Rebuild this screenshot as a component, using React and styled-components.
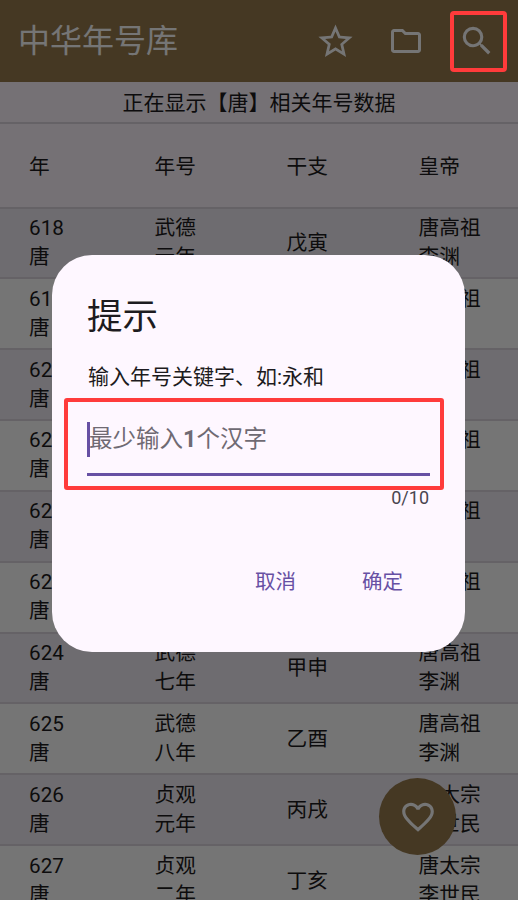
import React from 'react';
import styled, { createGlobalStyle } from 'styled-components';
import { MdFavoriteBorder, MdOutlineFolder, MdSearch, MdStarBorder } from 'react-icons/md';

const fontStack = `Roboto, 'Noto Sans CJK SC', sans-serif`;

const rows = [
  ['618', '武德', '元年', '戊寅', '唐高祖', '李渊'],
  ['619', '武德', '二年', '己卯', '唐高祖', '李渊'],
  ['620', '武德', '三年', '庚辰', '唐高祖', '李渊'],
  ['621', '武德', '四年', '辛巳', '唐高祖', '李渊'],
  ['622', '武德', '五年', '壬午', '唐高祖', '李渊'],
  ['623', '武德', '六年', '癸未', '唐高祖', '李渊'],
  ['624', '武德', '七年', '甲申', '唐高祖', '李渊'],
  ['625', '武德', '八年', '乙酉', '唐高祖', '李渊'],
  ['626', '贞观', '元年', '丙戌', '唐太宗', '李世民'],
  ['627', '贞观', '二年', '丁亥', '唐太宗', '李世民'],
];

const App = () => (
  <>
    <GlobalStyle />
    <Page>
      <AppBar>
        <Title>中华年号库</Title>
        <Actions>
          <ActionIcon $width={54}><MdStarBorder size={41} /></ActionIcon>
          <ActionIcon $width={88}><MdOutlineFolder size={36} /></ActionIcon>
          <SearchMark><MdSearch size={38} /></SearchMark>
        </Actions>
      </AppBar>
      <Banner>正在显示【唐】相关年号数据</Banner>
      <HeaderRow>
        <Single>年</Single>
        <Single>年号</Single>
        <Single>干支</Single>
        <Single>皇帝</Single>
      </HeaderRow>
      {rows.map((row, i) => (
        <DataRow key={row[0]} $shaded={i % 2 === 0}>
          <Stack>
            <span>{row[0]}</span>
            <span>唐</span>
          </Stack>
          <Stack>
            <span>{row[1]}</span>
            <span>{row[2]}</span>
          </Stack>
          <Single>{row[3]}</Single>
          <Stack>
            <span>{row[4]}</span>
            <span>{row[5]}</span>
          </Stack>
        </DataRow>
      ))}
      <Fab><MdFavoriteBorder size={38} /></Fab>
      <Scrim>
        <Dialog>
          <DialogTitle>提示</DialogTitle>
          <DialogHint>输入年号关键字、如:永和</DialogHint>
          <Field>
            <Caret />
            <Placeholder>最少输入<Digit>1</Digit>个汉字</Placeholder>
          </Field>
          <Counter>0/10</Counter>
          <DialogActions>
            <TextButton>取消</TextButton>
            <TextButton>确定</TextButton>
          </DialogActions>
        </Dialog>
      </Scrim>
    </Page>
  </>
);

const GlobalStyle = createGlobalStyle`
  html, body {
    margin: 0;
    padding: 0;
    background: #757175;
  }
  body {
    font-family: ${fontStack};
  }
`;

const Page = styled.div`
  position: relative;
  width: 518px;
  height: 900px;
  overflow: hidden;
  background: #fef7ff;
  color: #1d1b20;
`;

const AppBar = styled.header`
  display: flex;
  align-items: center;
  justify-content: space-between;
  height: 82px;
  padding: 0 11px 0 18px;
  box-sizing: border-box;
  background: #967a4c;
  color: #fff;
`;

const Title = styled.h1`
  margin: 0;
  font-size: 32px;
  font-weight: 400;
  line-height: 1;
`;

const Actions = styled.div`
  display: flex;
  align-items: center;
`;

const ActionIcon = styled.div`
  display: flex;
  align-items: center;
  justify-content: center;
  width: ${({ $width }) => $width}px;
  height: 61px;
`;

/* the red marker sits above the scrim, as in the picture */
const SearchMark = styled.div`
  position: relative;
  z-index: 20;
  display: flex;
  align-items: center;
  justify-content: center;
  width: 57px;
  height: 61px;
  padding-right: 4px;
  box-sizing: border-box;
  color: #757575;
  border: 4px solid #ff3b3b;
  border-radius: 4px;
`;

const Banner = styled.div`
  height: 42px;
  border-bottom: 2px solid #ddd6de;
  box-sizing: border-box;
  font-size: 21px;
  line-height: 42px;
  text-align: center;
`;

const Columns = styled.div`
  display: grid;
  grid-template-columns: 125.5px 132px 132px 1fr;
  align-items: center;
  padding-left: 29px;
  box-sizing: border-box;
  border-bottom: 2px solid #ddd6de;
  font-size: 20.7px;
`;

const HeaderRow = styled(Columns)`
  height: 84.5px;
  padding-top: 2px;
`;

const DataRow = styled(Columns)`
  height: 70.85px;
  background: ${({ $shaded }) => ($shaded ? '#f0ecf3' : '#fff')};
`;

const Stack = styled.div`
  display: flex;
  flex-direction: column;
  line-height: 29px;
`;

const Single = styled.span`
  line-height: 29px;
  padding-top: 2px;
`;

const Fab = styled.div`
  position: absolute;
  left: 379px;
  top: 778px;
  z-index: 20;
  display: flex;
  align-items: center;
  justify-content: center;
  width: 77px;
  height: 77px;
  border-radius: 50%;
  background: #453823;
  color: #757575;
`;

const Scrim = styled.div`
  position: absolute;
  inset: 0;
  z-index: 10;
  background: rgba(0, 0, 0, 0.54);
`;

const Dialog = styled.div`
  position: absolute;
  left: 52px;
  top: 255px;
  width: 413px;
  height: 397px;
  box-sizing: border-box;
  padding: 38px 36px 0;
  border-radius: 40px;
  background: #fef7ff;
`;

const DialogTitle = styled.h2`
  margin: 0 0 0 -1px;
  font-size: 35.5px;
  font-weight: 400;
  line-height: 48px;
`;

const DialogHint = styled.p`
  margin: 16px 0 0;
  font-size: 21px;
  line-height: 40px;
`;

const Field = styled.div`
  position: relative;
  display: flex;
  align-items: center;
  margin: 13px -1px 0 -1px;
  padding: 12px 0 16px;
  border-bottom: 3px solid #6750a4;

  &::after {
    content: '';
    position: absolute;
    left: -23px;
    right: -14px;
    top: -12px;
    bottom: -17px;
    border: 4px solid #ff3b3b;
    border-radius: 3px;
    pointer-events: none;
  }
`;

const Caret = styled.span`
  flex: none;
  width: 3px;
  height: 35px;
  background: #6750a4;
`;

const Placeholder = styled.span`
  margin-left: -1px;
  font-size: 23.5px;
  line-height: 35px;
  color: #6f6a73;
`;

const Digit = styled.span`
  font-weight: 700;
`;

const Counter = styled.div`
  margin-top: 11px;
  font-size: 18px;
  line-height: 22px;
  text-align: right;
  color: #49454f;
`;

const DialogActions = styled.div`
  display: flex;
  justify-content: flex-end;
  gap: 66px;
  margin-top: 59px;
  padding-right: 26px;
`;

const TextButton = styled.span`
  font-size: 20.5px;
  line-height: 28px;
  color: #6750a4;
`;

export default App;
